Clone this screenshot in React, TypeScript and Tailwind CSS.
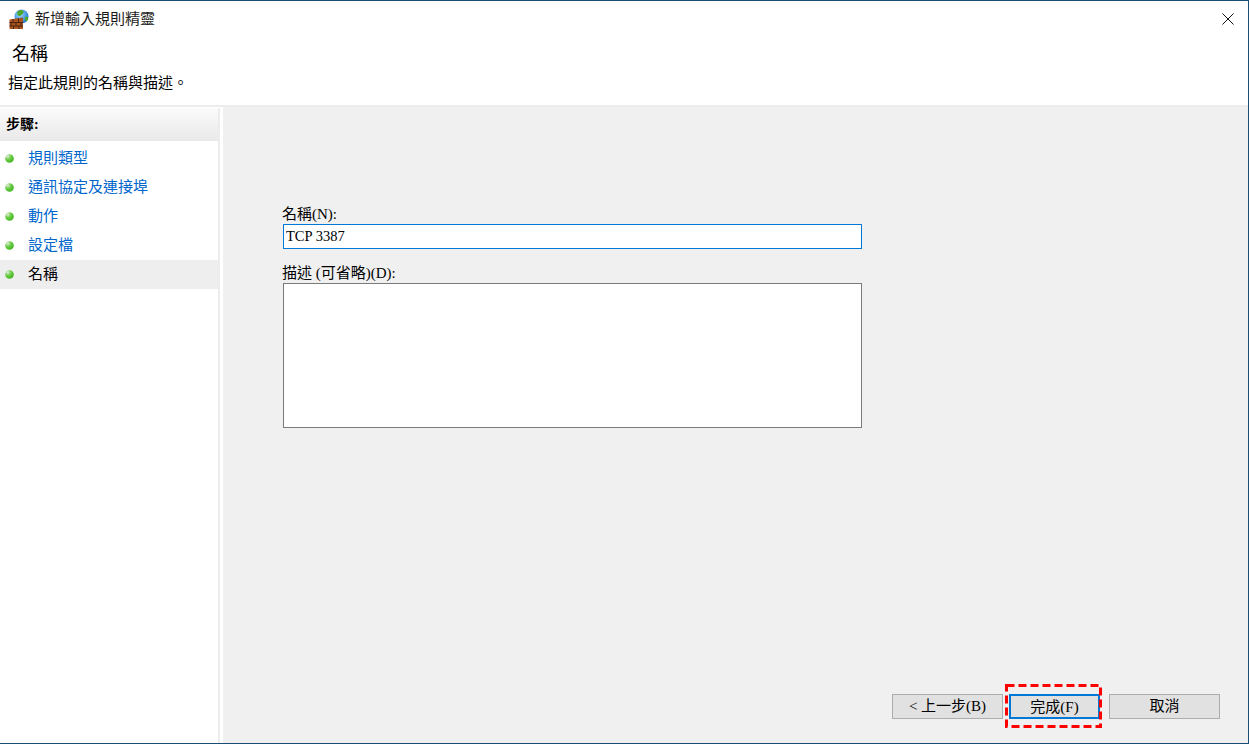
const cjk = "font-['PMingLiU','Liberation_Serif','Noto_Sans_CJK_TC',serif]";

const steps = [
  { label: '規則類型' },
  { label: '通訊協定及連接埠' },
  { label: '動作' },
  { label: '設定檔' },
  { label: '名稱', active: true },
];

function FirewallIcon() {
  return (
    <svg width="20" height="20" viewBox="0 0 20 20">
      <defs>
        <radialGradient id="globe" cx="0.4" cy="0.35" r="0.7">
          <stop offset="0" stopColor="#9adcff" />
          <stop offset="1" stopColor="#1a6fd0" />
        </radialGradient>
        <radialGradient id="dot" cx="0.3" cy="0.25" r="0.8">
          <stop offset="0" stopColor="#e4ece0" />
          <stop offset="0.45" stopColor="#6fce4a" />
          <stop offset="1" stopColor="#3fb51c" />
        </radialGradient>
      </defs>
      <circle cx="12.500" cy="7.500" r="7" fill="url(#globe)" />
      <path d="M9 2c2-1.500 5-1 5.500.5s-1 2.500-2 3.500-2.500 1.500-3.500.5-1-3.500 0-4.500z" fill="#4fa82e" />
      <path d="M16 8c1.500-.5 3.300 0 3.300 1s-1 3.500-2 3.500-1.800-3.500-1.300-4.500z" fill="#4fa82e" />
      <path d="M0.500 10.500 14 8.500V20H0.500z" fill="#a9531d" />
      <path
        d="M0.500 13.500h13.500M0.500 17h13.500M4 10V13.500M9.500 9.500V13.500M2 13.500V17M7 13.500V17M12 13.500V17M4.500 17V20M10 17V20"
        stroke="#4d2410"
        strokeWidth="1"
        fill="none"
      />
    </svg>
  );
}

function StepDot() {
  return (
    <svg width="9" height="9" viewBox="0 0 9 9" className="shrink-0">
      <circle cx="4.500" cy="4.500" r="4.300" fill="url(#dot)" />
    </svg>
  );
}

function WizardButton({ children, primary }: { children: string; primary?: boolean }) {
  return (
    <button
      className={
        primary
          ? 'h-[25px] w-[91px] border-2 border-[#0078d7] bg-[#e1e1e1] text-[15px] text-black'
          : 'h-[25px] w-[111px] border border-[#adadad] bg-[#e1e1e1] text-[15px] text-black'
      }
    >
      {children}
    </button>
  );
}

export default function App() {
  return (
    <div className={`flex h-[744px] w-[1249px] flex-col overflow-hidden border-t border-r border-b border-[#1c4e73] bg-white ${cjk}`}>
      <div className="flex h-[35px] shrink-0 items-center pl-[9px] pr-[14px]">
        <FirewallIcon />
        <span className="ml-[6px] pt-[2px] text-[15px] text-[#1a1a1a]">新增輸入規則精靈</span>
        <svg width="12" height="12" viewBox="0 0 12 12" className="ml-auto">
          <path d="M.5.5l11 11M11.500.5l-11 11" stroke="#111" strokeWidth="1" fill="none" />
        </svg>
      </div>

      <div className="h-[71px] shrink-0 border-b-2 border-[#ececec] pl-[8px] pt-[1px]">
        <div className="pl-[4px] text-[18px] leading-[34px] text-black">名稱</div>
        <div className="mt-[2px] text-[15px] leading-[21px] text-black">指定此規則的名稱與描述。</div>
      </div>

      <div className="flex min-h-0 flex-1">
        <div className="flex w-[223px] shrink-0 flex-col pt-[1px]">
          <div className="w-[220px] flex-1 border-r-2 border-[#ececec]">
            <div className="flex h-[33px] items-center bg-gradient-to-b from-[#fbfbfb] to-[#e9e9e9] pl-[6px] text-[14px] font-bold text-black">
              步驟:
            </div>
            <div className="pt-[3px]">
              {steps.map((step) => (
                <div
                  key={step.label}
                  className={`flex h-[29px] items-center gap-[14px] pl-[5px] text-[15px] ${step.active ? 'bg-[#eeeeee] text-black' : 'text-[#0066cc]'}`}
                >
                  <StepDot />
                  <span>{step.label}</span>
                </div>
              ))}
            </div>
          </div>
        </div>

        <div className="flex flex-1 flex-col bg-[#f0f0f0] pl-[60px] pr-[28px] pt-[98px] pb-[24px]">
          <div className="-ml-[1px] text-[15px] leading-[18px] text-black">名稱(N):</div>
          <input
            readOnly
            value="TCP 3387"
            className="mt-[1px] h-[25px] w-[579px] border border-[#0078d7] bg-white px-[2px] text-[14.500px] text-black outline-none"
          />
          <div className="-ml-[1px] mt-[15px] text-[15px] leading-[18px] text-black">描述 (可省略)(D):</div>
          <textarea
            readOnly
            className="mt-[1px] h-[145px] w-[579px] resize-none border border-[#7a7a7a] bg-white outline-none"
          />
          <div className="mt-auto flex justify-end">
            <WizardButton>{'< 上一步(B)'}</WizardButton>
            <div className="relative ml-[6px] mr-[9px]">
              <WizardButton primary>完成(F)</WizardButton>
              <svg width="97" height="44" className="absolute -top-[10px] -left-[4px]">
                <rect x="1.500" y="1.500" width="94" height="41" fill="none" stroke="#ff0000" strokeWidth="3" strokeDasharray="8 4" />
              </svg>
            </div>
            <WizardButton>取消</WizardButton>
          </div>
        </div>
      </div>
    </div>
  );
}
